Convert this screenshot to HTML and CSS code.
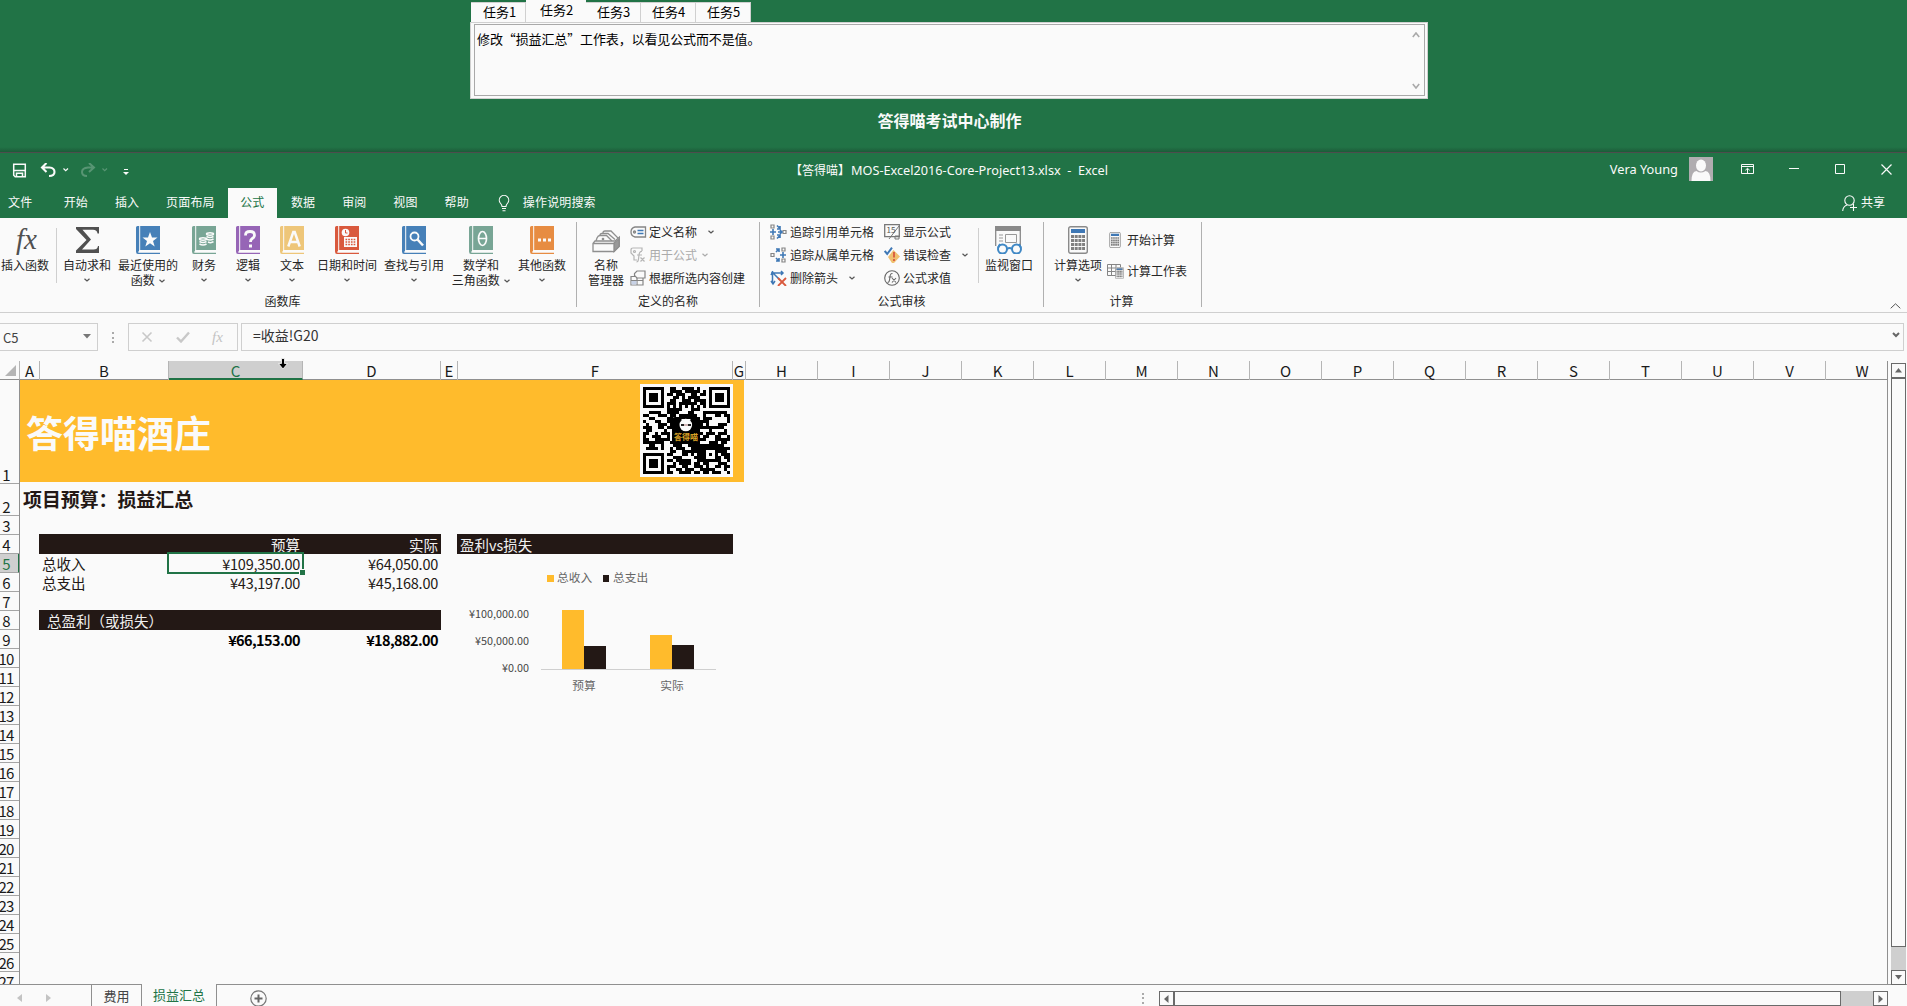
FILE: index.html
```html
<!DOCTYPE html>
<html lang="zh-CN">
<head>
<meta charset="utf-8">
<title>MOS-Excel2016-Core-Project13.xlsx - Excel</title>
<link rel="stylesheet" href="styles.css">
</head>
<body>
<svg class="defs" width="0" height="0">
  <symbol id="chev" viewBox="0 0 6 4"><path d="M.5.7 3 3 5.5.7" fill="none" stroke="currentColor" stroke-width="1.2"/></symbol>
  <symbol id="book" viewBox="0 0 24 28"><path d="M0 1.5Q0 0 1.5 0H24V24H3V26.5H24V28H2Q0 28 0 25.5Z" fill="currentColor"/><path d="M3.7 0V24M2 26H24" stroke="#fafafa"/></symbol>
  <symbol id="calc" viewBox="0 0 20 28"><rect x=".7" y=".7" width="18.6" height="26.6" rx="2" fill="#fafafa" stroke="#8a8a8a" stroke-width="1.4"/><path d="M3 3h14v4H3z" fill="#3f78b5"/><path d="M3 10.5h14M3 14.5h14M3 18.5h14M3 22.5h14" stroke="#808080" stroke-width="3" stroke-dasharray="3 .7"/></symbol>
</svg>

<header class="exam">
  <div class="task-panel">
    <nav class="task-tabs"><span>任务1</span><span class="on">任务2</span><span>任务3</span><span>任务4</span><span>任务5</span></nav>
    <div class="task-frame"><div class="task-box">
      <p>修改“损益汇总”工作表，以看见公式而不是值。</p>
      <div class="task-scroll">
        <svg width="8" height="6"><path d="M.8 5 4 1l3.2 4" fill="none" stroke="#aaa" stroke-width="1.6"/></svg>
        <svg width="8" height="6"><path d="M.8 1 4 5l3.2-4" fill="none" stroke="#aaa" stroke-width="1.6"/></svg>
      </div>
    </div></div>
  </div>
  <div class="maker">答得喵考试中心制作</div>
</header>

<div class="titlebar">
  <div class="quick">
    <svg width="110" height="18" fill="none" stroke="#fafafa">
      <path d="M1.700 1.200h11.600v12.600H3.200L1.700 12.300zM2 7.500h11M4.500 13.500v-3.200h6v3.200" stroke-width="1.500"/>
      <path d="M34.500 0 30 4.500l4.500 4.500M31 4.500h6.500q5 .5 5 4.500t-5.500 4" stroke-width="2.100"/>
      <path d="m51.500 5.500 2.200 2.200L56 5.500" stroke-width="1.200"/>
      <g opacity=".25"><path d="m77 0 5 4.500-5 4.500M82 4.500h-6q-6 .5-6 4.500t5 4" stroke-width="2"/><path d="m90.500 5.500 2.200 2.200L95 5.500" stroke-width="1.200"/></g>
    </svg>
    <svg class="more" width="6" height="8"><path d="M1 1.500h4" stroke="#fafafa"/><path d="M0 4h6L3 7z" fill="#fafafa"/></svg>
  </div>
  <div class="doc-title"><span>【答得喵】</span><span class="doc-name">MOS-Excel2016-Core-Project13.xlsx&nbsp; -&nbsp; Excel</span></div>
  <div class="account">
    <span class="user">Vera Young</span>
    <svg width="24" height="24"><path d="M0 0h24v24H0z" fill="#b0adb0"/><ellipse cx="12" cy="8.500" rx="5" ry="6" fill="#fafafa"/><path d="M2.500 24q0-9.500 5-10 4 3 9 0 5 .5 5 10z" fill="#fafafa"/></svg>
    <svg width="13" height="10" fill="none" stroke="#fafafa"><path d="M.5.5h12v9H.5zM.5 2.500h12M6.500 9V4.500M4.300 6.300l2.200-2 2.200 2"/></svg>
    <svg width="10" height="10"><path d="M0 4.500h10" stroke="#fafafa"/></svg>
    <svg width="10" height="10"><path d="M.5.5h9v9h-9z" fill="none" stroke="#fafafa"/></svg>
    <svg width="11" height="11"><path d="m.5.5 10 10m0-10-10 10" stroke="#fafafa" stroke-width="1.200"/></svg>
  </div>
</div>

<nav class="tabs">
  <span class="file">文件</span><span>开始</span><span>插入</span><span>页面布局</span><span class="active">公式</span><span>数据</span><span>审阅</span><span>视图</span><span>帮助</span>
  <svg class="bulb" width="12" height="17" fill="none" stroke="#fafafa" stroke-width="1.100"><path d="M4 11.500Q4 10 2.300 8A4.700 4.700 0 1 1 9.700 8Q8 10 8 11.500zM4 13.500h4M4.500 15.800h3"/></svg>
  <span class="tell">操作说明搜索</span>
  <div class="share"><svg width="16" height="17" fill="none" stroke="#fafafa" stroke-width="1.100"><circle cx="7.500" cy="5.500" r="4.700"/><path d="M.7 16q.3-4.500 4.300-6M11.500 9v7M8 12.500h7"/></svg><span>共享</span></div>
</nav>

<section class="ribbon">
  <div class="group lib">
    <div class="row">
      <button class="big w50"><span class="fx">fx</span>插入函数</button>
      <i class="sep"></i>
      <button class="big w60"><svg width="24" height="28"><path d="M1 1h23v6.500h-1.500Q22 3.800 18 3.800H7.500L16 13.500 7 23.500h11.500q4 0 4.500-3.500h1V27H1v-2.500L11.500 14 1 3z" fill="#505050"/></svg>自动求和<svg class="chev"><use href="#chev"/></svg></button>
      <button class="big w62"><svg class="blue" width="24" height="28"><use href="#book"/><path d="m14 6 2 5.500h5.500L17 15l1.700 5.500L14 17.200 9.300 20.500 11 15 6.500 11.500H12z" fill="#fafafa"/></svg>最近使用的<span>函数 <svg class="chev in"><use href="#chev"/></svg></span></button>
      <button class="big w50"><svg class="teal" width="24" height="28"><use href="#book"/><g fill="none" stroke="#fafafa" stroke-width="1.500"><ellipse cx="18" cy="8" rx="3.500" ry="1.200"/><path d="M14.500 10.500q3.500 2 7 0M14.500 13q3.500 2 7 0M16 16q3 1.500 5.500-.3"/><ellipse cx="11" cy="13" rx="3.500" ry="1.200"/><path d="M7.500 15.500q3.500 2 7 0M7.500 18q3.500 2 7 0"/></g></svg>财务<svg class="chev"><use href="#chev"/></svg></button>
      <button class="big w38"><svg class="purple" width="24" height="28"><use href="#book"/><path d="M9.500 9.500q0-4 4.500-4t4.500 3.700q0 2-2.500 3.600-1.500 1-1.500 3.200" fill="none" stroke="#fafafa" stroke-width="2.800"/><path d="M13 18.500h3v3h-3z" fill="#fafafa"/></svg>逻辑<svg class="chev"><use href="#chev"/></svg></button>
      <button class="big w50"><svg class="sand" width="24" height="28"><use href="#book"/><path d="m8.300 20.500 5-14.500h1.400l5 14.500M10 16h8" fill="none" stroke="#fafafa" stroke-width="2.500"/></svg>文本<svg class="chev"><use href="#chev"/></svg></button>
      <button class="big w60"><svg class="red" width="24" height="28"><use href="#book"/><circle cx="10.500" cy="6.500" r="3.800" fill="#fafafa"/><path d="M10.500 4v3h2" fill="none" stroke="#d9593d"/><path d="M9 11h13v10H9z" fill="#fafafa"/><path d="M10.500 13.500h10.500M10.500 16h10.500M10.500 18.500h10.500" stroke="#d9593d" stroke-width="1.500" stroke-dasharray="1.700 1"/></svg>日期和时间<svg class="chev"><use href="#chev"/></svg></button>
      <button class="big w74"><svg class="blue" width="24" height="28"><use href="#book"/><circle cx="12.500" cy="10.500" r="4" fill="none" stroke="#fafafa" stroke-width="1.800"/><path d="m15.500 13.500 5.500 6" stroke="#fafafa" stroke-width="2.500"/></svg>查找与引用<svg class="chev"><use href="#chev"/></svg></button>
      <button class="big w60"><svg class="teal" width="24" height="28"><use href="#book"/><ellipse cx="13.500" cy="12.500" rx="4" ry="7" fill="none" stroke="#fafafa" stroke-width="1.700"/><path d="M9.500 12.500h8" stroke="#fafafa" stroke-width="1.500"/></svg>数学和<span>三角函数 <svg class="chev in"><use href="#chev"/></svg></span></button>
      <button class="big w62"><svg class="orange" width="24" height="28"><use href="#book"/><path d="M8 14h3m2 0h3m2 0h3" stroke="#fafafa" stroke-width="3"/></svg>其他函数<svg class="chev"><use href="#chev"/></svg></button>
    </div>
    <div class="cap">函数库</div>
  </div>

  <div class="group names">
    <div class="row">
      <button class="big mgr"><svg width="28" height="22" fill="#fafafa" stroke="#8f8f8f" stroke-width="1.300"><path d="M11 7V3q0-2 2-2h6l7 7v9"/><path d="M8 9V5.500q0-2 2-2h6l7 6"/><path d="M4 11 5 8q1-2.500 3-2.500h6.500L20 11"/><path d="m1 13.500 2-2.500h20l4.500-4v9L22 21.500H1z" fill="#fafafa"/><path d="M22 13v8.500l5-5V9z" fill="#999"/><path d="M1 13.500h21V21"/><circle cx="11" cy="9" r=".7"/></svg>名称<span>管理器</span></button>
      <div class="stack">
        <button class="sm"><svg width="17" height="16" fill="none" stroke="#858585" stroke-width="1.300"><path d="M5 3h10.500v10H5Q1 12 1 8t4-5z"/><circle cx="4.500" cy="8" r="1"/><path d="M7.500 6.500h6M7.500 9.500h6" stroke="#3f78b5"/></svg>定义名称 <svg class="chev gap8"><use href="#chev"/></svg></button>
        <button class="sm off"><svg width="17" height="16" fill="none" stroke="#b5b5b5" stroke-width="1.200"><path d="M7 13H4V9L1 6V3q0-2 2-2h9v3"/><circle cx="4.500" cy="4.500" r="1"/><path d="M12 4.500Q9.500 4 9 8l-.5 4q-.3 3-2 3M7 8h5m-1.500 2.500 4 4m0-4-4 4"/></svg>用于公式<svg class="chev gap2"><use href="#chev"/></svg></button>
        <button class="sm"><svg width="17" height="16" fill="#fafafa" stroke="#858585" stroke-width="1.200"><path d="M1 6.500h12v8.500H1zM1 10.500h12M7 6.500V15"/><path d="M1.500 11h5v3.500h-5z" fill="#c8d2e6" stroke="none"/><path d="M7 1h8v7H7L4.500 5.500V3.500z"/></svg>根据所选内容创建</button>
      </div>
    </div>
    <div class="cap">定义的名称</div>
  </div>

  <div class="group audit">
    <div class="row">
      <div class="stack c1">
        <button class="sm"><svg width="18" height="16" fill="none" stroke="#858585" stroke-width="1.200"><path d="M1 1h3v3H1zM1 12h3v3H1zM13 6.500h3v3h-3z"/><path d="M0 8h6M3 5v6M7 1.500l3 3M10 2v3H7M7 14.500l3-3M10 14v-3H7M8 8h4M10 6l2 2-2 2" stroke="#3f78b5" stroke-width="1.600"/></svg>追踪引用单元格</button>
        <button class="sm"><svg width="18" height="16" fill="none" stroke="#858585" stroke-width="1.200"><path d="M1 6.500h3v3H1zM12 1h3v3h-3zM12 12h3v3h-3z"/><path d="M10 8h6M13 5v6M6 5l3-3M9 5V2H6M6 11l3 3M9 11v3H6" stroke="#3f78b5" stroke-width="1.600"/></svg>追踪从属单元格</button>
        <button class="sm"><svg width="18" height="16" fill="none"><path d="M2.500 1v12M1 3h12M1 5l1.500-3L5 5M11 1l2 2-2 2M4 4l6 6M1 11l2 3 2-3" stroke="#3f78b5" stroke-width="1.500"/><path d="m8 8 8 8m0-8-8 8" stroke="#d9593d" stroke-width="1.800"/></svg>删除箭头 <svg class="chev gap8"><use href="#chev"/></svg></button>
      </div>
      <div class="stack c2">
        <button class="sm"><svg width="17" height="16"><path d="M.7.700h14.600v12H.7z" fill="none" stroke="#777" stroke-width="1.300"/><path d="M15 2 5 15M11 12h4v3h-4z" stroke="#777" fill="none"/><text x="2.500" y="9" font-size="8" fill="#555">15</text></svg>显示公式</button>
        <button class="sm"><svg width="17" height="16"><path d="M9.500 3 16 9.500 10 16H8L4 10z" fill="#f0c070"/><path d="m.7 4 2.500 3L8 .7" fill="none" stroke="#3f78b5" stroke-width="2"/><path d="M10 5v5.500m0 1.500v2" stroke="#d9593d" stroke-width="1.800"/></svg>错误检查<svg class="chev gap11"><use href="#chev"/></svg></button>
        <button class="sm"><svg width="17" height="16" fill="none" stroke="#666" stroke-width="1.100"><circle cx="8" cy="8" r="7.300"/><path d="M8.500 3.500q-2-.5-2.500 3L5.500 10q-.3 2.500-2 2.500M4.500 7h4M8 8l4 4.500M12 8l-4 4.500"/></svg>公式求值</button>
      </div>
      <i class="sep"></i>
      <button class="big w60"><svg width="29" height="31" fill="none"><path d="M.7.700h24.600V20M.7.700V20" stroke="#8a8a8a" stroke-width="1.300"/><path d="M0 0h26v5H0z" fill="#8a8a8a"/><path d="M4 9h4M4 12h4M4 15h4M10.500 8.500h11v8h-11z" stroke="#999"/><circle cx="7.500" cy="23" r="4.500" stroke="#3f88c5" stroke-width="2"/><circle cx="21.500" cy="23" r="4.500" stroke="#3f88c5" stroke-width="2"/><path d="M12 23q2.500-2 5 0M3 22l2-4M26 22l-2-4" stroke="#3f88c5" stroke-width="1.800"/></svg>监视窗口</button>
    </div>
    <div class="cap">公式审核</div>
  </div>

  <div class="group compute">
    <div class="row">
      <button class="big w62"><svg width="20" height="28"><use href="#calc"/></svg>计算选项<svg class="chev"><use href="#chev"/></svg></button>
      <div class="stack two">
        <button class="sm"><svg width="18" height="16"><use href="#calc" x="2" width="12" height="16"/></svg>开始计算</button>
        <button class="sm"><svg width="18" height="16" fill="none" stroke="#858585"><path d="M.5 1.500h13v11H.5zM.5 5h13M.5 8.500h13M4.500 1.500v11M9 1.500v11"/><use href="#calc" x="8" y="4" width="9" height="12"/></svg>计算工作表</button>
      </div>
    </div>
    <div class="cap">计算</div>
  </div>
  <svg class="collapse" width="11" height="6"><path d="M.7 5.300 5.500.8l4.800 4.500" fill="none" stroke="#555"/></svg>
</section>

<div class="formula-bar">
  <div class="name-box"><span>C5</span><svg width="8" height="5"><path d="M0 0h8L4 4.500z" fill="#777"/></svg></div>
  <i class="dots"></i>
  <div class="fbtns">
    <svg width="12" height="12"><path d="m1.500 1.500 9 9m0-9-9 9" stroke="#c8c8c8" stroke-width="1.600"/></svg>
    <svg width="14" height="12"><path d="m1 6.500 4 4 8-9" fill="none" stroke="#c8c8c8" stroke-width="2.400"/></svg>
    <span class="fx small">fx</span>
  </div>
  <div class="formula"><span>=收益!G20</span><svg width="8" height="6"><path d="m1 1 3 3 3-3" fill="none" stroke="#666" stroke-width="2"/></svg></div>
</div>

<main class="work">
  <div class="sheet">
    <div class="corner"><svg width="11" height="11"><path d="M11 0v11H0z" fill="#b5b5b5"/></svg></div>
    <div class="cols" id="cols"></div>
    <div class="rows" id="rows"></div>
    <div class="cells">
      <div class="banner"><h1>答得喵酒庄</h1>
        <svg class="qr" width="93" height="93"><path d="M0 0h93v93H0z" fill="#fafafa"/><path id="qr" fill="#000"/><rect x="32" y="33" width="28" height="27" rx="3"/><circle cx="45.800" cy="41" r="6.300" fill="#fafafa"/><path d="M41 35l2 2h6l2-2" fill="#fafafa"/><path d="M41 41h3m4 0h3" stroke="#222" stroke-width="2"/><path d="M44 41h4" stroke="#a77"/><text x="34" y="56" font-size="8" font-weight="700" fill="#d9a227">答得喵</text></svg>
      </div>
      <h2>项目预算：损益汇总</h2>
      <div class="bar r4 bc"></div><div class="bar r8 bc"></div>
      <div class="c r4 cC lt">预算</div><div class="c r4 cD lt">实际</div>
      <div class="l r5">总收入</div><div class="c n r5 cC">¥109,350.00</div><div class="c n r5 cD">¥64,050.00</div>
      <div class="l r6">总支出</div><div class="c n r6 cC">¥43,197.00</div><div class="c n r6 cD">¥45,168.00</div>
      <div class="l r8 lt total">总盈利（或损失）</div>
      <div class="c r9 cC b">¥66,153.00</div><div class="c r9 cD b">¥18,882.00</div>
      <div class="bar r4 cF lt">盈利vs损失</div>
      <div class="selection"><i></i></div>
      <svg class="chart" width="276" height="150">
        <g fill="#ffbb2c"><path d="M90 22h7v7h-7zM105 57h22v59h-22zM193 82h22v34h-22z"/></g>
        <g fill="#231815"><path d="M146 22h6v7h-6zM127 93h22v23h-22zM215 92h22v24h-22z"/></g>
        <path d="M84 116.500h175" stroke="#cfcfcf"/>
        <g class="axis"><text x="100" y="29">总收入</text><text x="156" y="29">总支出</text><text x="127" y="136.500" text-anchor="middle">预算</text><text x="215" y="136.500" text-anchor="middle">实际</text></g>
        <g class="axis num" text-anchor="end"><text x="72" y="65">¥100,000.00</text><text x="72" y="92">¥50,000.00</text><text x="72" y="119">¥0.00</text></g>
      </svg>
    </div>
  </div>
  <div class="vscroll"><i class="btn"><svg width="7" height="5"><path d="M3.500 0 7 4.500H0z" fill="#666"/></svg></i><i class="thumb"></i><i class="btn last"><svg width="7" height="5"><path d="M3.500 4.500 7 0H0z" fill="#666"/></svg></i></div>
  <svg class="cursor" width="10" height="12"><path d="M3.500.5h3v5h3L5 11 .5 5.500h3z" fill="#000" stroke="#fff" stroke-width=".8"/></svg>
</main>

<footer class="foot">
  <div class="nav"><svg width="34" height="8"><path d="M5 0v8L0 4zM29 0v8l5-4z" fill="#c3c3c3"/></svg></div>
  <div class="sheet-tab">费用</div>
  <div class="sheet-tab current">损益汇总</div>
  <div class="rest">
    <svg class="plus" width="17" height="17"><circle cx="8.500" cy="8.500" r="7.700" fill="none" stroke="#777" stroke-width="1.200"/><path d="M8.500 4.500v8M4.500 8.500h8" stroke="#666" stroke-width="2"/></svg>
    <i class="dots"></i>
    <div class="hscroll"><i class="btn"><svg width="5" height="8"><path d="M4.500 0v8L0 4z" fill="#666"/></svg></i><i class="thumb"></i><i class="btn last"><svg width="5" height="8"><path d="M.5 0v8L5 4z" fill="#666"/></svg></i></div>
  </div>
</footer>
<script src="main.js"></script>
</body>
</html>
```
FILE: main.js
```js
// Column letters and row numbers
const widths = [20, 129, 134, 138, 17, 275, 13];
const cols = document.getElementById('cols');
for (let i = 0; i < 23; i++) {
  const d = document.createElement('div');
  d.textContent = String.fromCharCode(65 + i);
  d.style.width = (widths[i] || (i === 22 ? 72 : 72)) + 'px';
  if (i === 2) d.className = 'sel';
  cols.append(d);
}
const rows = document.getElementById('rows');
for (let r = 1; r <= 27; r++) {
  const d = document.createElement('div');
  d.textContent = r;
  d.style.height = (r === 1 ? 104 : r === 2 ? 32 : 19) + 'px';
  if (r === 5) d.className = 'sel';
  rows.append(d);
}
// QR modules, one string per line
const qr = [
  '11111110011001111010001111111',
  '10000010011110111110101000001',
  '10111010110111001101101011101',
  '10111010001101011110001011101',
  '10111010011001110111101011101',
  '10000010111011111101101000001',
  '11111110101010101010101111111',
  '00000000111110001110000000000',
  '00111100111100011000111111110',
  '11000111011011111100100011011',
  '00110000110111111110111000001',
  '10001100111111111111110000001',
  '01000111011111111111010001110',
  '11100110111111111101111111100',
  '01100001001111111110001000010',
  '11001011101111111111011101110',
  '10011100101111111110110011001',
  '11001111101111111111100011111',
  '11111110011111111110001110110',
  '00110010001110011111111111100',
  '01111010010111001111111111111',
  '00000000011001111111100011110',
  '11111110110001101011101010111',
  '10000010001110000111100011011',
  '10111010110111110011111111001',
  '10111010001011110110110001110',
  '10111010111001100111010011011',
  '10000010100110111001111100010',
  '11111110110011110110110111001'
];
let path = '';
qr.forEach((s, y) => [...s].forEach((c, x) => {
  if (c === '1') path += `M${3 + x * 3} ${3 + y * 3}h3v3h-3z`;
}));
document.getElementById('qr').setAttribute('d', path);
```
FILE: styles.css
```css
* { box-sizing: border-box; }
body { margin: 0; width: 1907px; height: 1006px; overflow: hidden; display: flex; flex-direction: column; background: #fafafa; color: #262626; font: 12px/15px "Noto Sans CJK SC", sans-serif; }
svg { display: block; flex: none; }
.defs { position: absolute; }
i { display: block; }
button { border: 0; background: none; padding: 0; margin: 0; font: inherit; color: inherit; white-space: nowrap; }
h1, h2, p { margin: 0; }

.exam { height: 153px; flex: none; background: linear-gradient(#217346 147px, #1c5c39 152px, #4d4d4d 152px); display: flex; flex-direction: column; align-items: center; }
.task-panel { width: 958px; height: 99px; margin-right: 9px; display: flex; flex-direction: column; }
.task-tabs { display: flex; align-items: flex-end; height: 22px; padding-left: 1px; }
.task-tabs span { height: 20px; width: 55px; padding: 1px 0 0 1px; background: #fafafa; border: solid #d0d0d0; border-width: 1px 1px 0 0; text-align: center; font-size: 13px; line-height: 16px; color: #000; }
.task-tabs span:first-child { padding-left: 3px; }
.task-tabs span.on { height: 22px; width: 60px; border: 0; line-height: 17px; }
.task-frame { flex: 1; background: #fafafa; border: 1px solid #d0d0d0; padding: 1px 2px 2px 3px; }
.task-box { height: 100%; border: 1px solid #a9a9a9; display: flex; justify-content: space-between; padding: 6px 4px 4px 2px; font-size: 13px; line-height: 18px; color: #000; }
.task-box p { margin-top: -1px; letter-spacing: -.12px; }
.task-scroll { display: flex; flex-direction: column; justify-content: space-between; padding: 1px 0 2px; }
.maker { margin: 9px 0 0 -8px; font-size: 16px; line-height: 24px; font-weight: 700; color: #fafafa; }

.titlebar { height: 35px; flex: none; display: grid; grid-template-columns: 790px 1fr auto; background: #217346; color: #fafafa; }
.quick { display: flex; padding: 10px 0 0 12px; }
.more { margin-top: 5px; margin-left: 1px; }
.doc-title { display: flex; padding-top: 8px; font-size: 12px; line-height: 18px; }
.doc-name { font: 12.7px/18px "Noto Sans", sans-serif; white-space: pre; margin-left: 1px; }
.account { display: flex; align-items: center; padding: 0 15px 3px 0; }
.account .user { font: 12.8px/18px "Noto Sans", sans-serif; margin-right: 11px; }
.account svg:nth-of-type(2) { margin-left: 28px; }
.account svg:nth-of-type(n+3) { margin-left: 36px; }
.account svg:nth-of-type(3) { margin-left: 35px; }

.tabs { height: 30px; flex: none; display: flex; background: #217346; color: #fafafa; line-height: 27px; }
.tabs > span { padding: 0 13px 0 13.9px; letter-spacing: .15px; }
.tabs > .file { padding: 0 17.5px 0 8px; }
.tabs .active { background: #fafafa; color: #217346; padding: 0 12.5px; }
.bulb { margin: 7px 0 0 16px; }
.tabs > .tell { padding: 0 0 0 13px; }
.share { margin: 0 22px 0 auto; display: flex; gap: 3px; }
.share svg { margin-top: 7px; }

.ribbon { height: 95px; flex: none; display: flex; border-bottom: 1px solid #cfcfcf; position: relative; }
.group { margin: 4px 0; height: 85px; border-right: 1px solid #b0b0b0; display: flex; flex-direction: column; justify-content: space-between; }
.row { display: flex; }
.cap { text-align: center; line-height: 15px; margin-bottom: -1px; }
.sep { width: 1px; height: 55px; margin-top: 6px; background: #cfcfcf; }
.big { display: flex; flex-direction: column; align-items: center; padding-top: 4px; height: 66px; line-height: 15px; }
.big > svg:first-child, .big > .fx { margin-bottom: 3px; height: 28px; }
.w38 { width: 38px; } .w50 { width: 50px; } .w60 { width: 60px; } .w62 { width: 62px; } .w74 { width: 74px; }
.blue { color: #4680b8; } .teal { color: #78a595; } .purple { color: #9665b6; } .sand { color: #eec679; } .red { color: #d9593d; } .orange { color: #e78c42; }
.fx { font: italic 29px/26px "Liberation Serif", serif; color: #505050; padding-left: 3px; }
.chev { width: 6px; height: 4px; color: #555; }
.big > .chev { margin-top: 6px; }
.chev.in { display: inline-block; vertical-align: 2px; margin-left: 2px; }
.lib { width: 577px; }
.lib .sep { margin-left: 6px; }
.lib .cap { padding-right: 11px; }
.names { width: 183px; }
.mgr { width: 46px; margin-left: 6px; }
.mgr > svg:first-child { margin-top: 4px; height: 24px; }
.stack { display: flex; flex-direction: column; margin-top: -2px; }
.names .stack { margin-left: 1px; }
.sm { display: flex; align-items: center; height: 23px; gap: 2px; text-align: left; }
.stack .gap8 { margin-left: 9px; } .stack .gap2 { margin-left: 3px; } .stack .gap11 { margin-left: 9px; }
.off, .off .chev { color: #ababab; }
.audit { width: 284px; }
.c1 { margin-left: 10px; width: 114px; }
.c2 { width: 94px; }
.compute { width: 158px; }
.compute .big { margin-left: 3px; }
.compute .cap { padding-right: 2px; }
.two { padding-top: 8px; gap: 8px; margin-left: -2px; }
.collapse { position: absolute; right: 6px; bottom: 3px; }

.formula-bar { height: 48px; flex: none; display: flex; padding-top: 10px; }
.formula-bar > div { height: 28px; border: 1px solid #cfcfcf; }
.formula-bar > .name-box { width: 98px; border-left: 0; display: flex; justify-content: space-between; align-items: center; padding: 0 6px 2px 3px; font-size: 13px; }
.name-box span { padding-top: 2px; color: #444; }
.dots { width: 2px; height: 11px; background: repeating-linear-gradient(#aaa 0 2px, transparent 2px 4.500px); }
.formula-bar .dots { margin: 9px 14px 0; }
.fbtns { width: 110px; display: flex; align-items: center; gap: 23px; padding-left: 12px; }
.fx.small { font-size: 15px; line-height: 16px; color: #c3c3c3; padding: 0; margin-left: -1px; }
.formula { flex: 1; margin: 0 3px; display: flex; justify-content: space-between; align-items: center; padding: 0 3px 4px 11px; font-size: 14px; line-height: 20px; color: #333; }

.work { height: 623px; flex: none; display: flex; position: relative; }
.sheet { width: 1888px; display: grid; grid-template: 19px 604px / 20px 1868px; border-right: 1px solid #8f8f8f; overflow: hidden; }
.corner { border-right: 1px solid #b5b5b5; border-bottom: 1px solid #8f8f8f; padding: 4px 0 0 5px; }
.cols { display: flex; border-bottom: 1px solid #8f8f8f; }
.cols div { flex: none; height: 19px; border-right: 1px solid #b5b5b5; font-size: 15px; line-height: 20px; display: flex; justify-content: center; color: #1a1a1a; }
.cols div:last-child { border: 0; }
.cols .sel { background: #cfcfcf; color: #217346; border-bottom: 2px solid #217346; }
.rows { border-right: 1px solid #8f8f8f; overflow: hidden; }
.rows div { border-bottom: 1px solid #a5a5a5; display: flex; align-items: flex-end; justify-content: center; padding: 0 7px 1px 0; font-size: 15px; line-height: 15px; letter-spacing: -.9px; color: #1a1a1a; white-space: nowrap; }
.rows .sel { background: #cfcfcf; color: #217346; border-right: 2px solid #217346; margin-right: -1px; padding-right: 6px; }
.cells { display: grid; grid-template-columns: 19px 129px 135px 138px 16px 276px 12px 1fr; grid-template-rows: 102px 33px repeat(25, 19px); position: relative; font-size: 14.500px; line-height: 21px; color: #231815; }
.banner { grid-area: 1 / 1 / 2 / 8; width: 724px; background: #ffbb2c; display: flex; justify-content: space-between; padding: 4px 11px 0 6px; }
.banner h1 { font-size: 37px; line-height: 96px; font-weight: 700; color: #fafafa; }
h2 { grid-area: 2 / 1 / 3 / 8; font-size: 18.900px; line-height: 34px; font-weight: 700; padding-left: 3px; }
.bar { background: #231815; height: 20px; }
.bc { grid-column: 2 / 5; }
.cF { grid-column: 6; padding-left: 3px; }
.r4 { grid-row: 4; } .r5 { grid-row: 5; } .r6 { grid-row: 6; } .r8 { grid-row: 8; } .r9 { grid-row: 9; }
.cC { grid-column: 3; } .cD { grid-column: 4; }
.c { text-align: right; padding-right: 3px; }
.n { letter-spacing: -.25px; }
.l { grid-column: 2 / 4; padding-left: 3px; }
.lt { color: #f0f0f0; z-index: 1; }
.total { padding-left: 8px; }
.b { font-weight: 700; letter-spacing: -.6px; color: #000; }
.selection { position: absolute; left: 147px; top: 172px; width: 137px; height: 22px; border: 2px solid #217346; z-index: 2; }
.selection i { position: absolute; right: -3px; bottom: -3px; width: 6px; height: 6px; background: #217346; border: solid #fafafa; border-width: 1px 0 0 1px; }
.chart { grid-area: 5 / 6 / 13 / 7; }
.axis { font-size: 11.700px; fill: #666; }
.num { font-size: 10.800px; fill: #444; }
.vscroll { margin: 2px 1px 0 3px; width: 15px; height: 622px; display: flex; flex-direction: column; background: #cfcfcf; }
.btn, .thumb { border: 1px solid #6a6a6a; background: #fafafa; }
.btn { width: 15px; height: 15px; display: grid; place-items: center; flex: none; }
.vscroll .thumb { height: 569px; }
.last { margin: auto 0 0 auto; }
.cursor { position: absolute; left: 278px; top: -3px; }

.foot { height: 22px; flex: none; display: flex; }
.foot > div { border-top: 1px solid #8f8f8f; }
.nav { width: 91px; padding: 9px 0 0 17px; }
.sheet-tab { width: 51px; border-left: 1px solid #8f8f8f; border-right: 1px solid #8f8f8f; font-size: 13px; line-height: 22px; text-align: center; color: #444; }
.foot .current { width: 74px; border: 0; color: #217346; }
.rest { flex: 1; border-left: 1px solid #8f8f8f; display: flex; }
.plus { margin: 5px 0 0 33px; }
.rest .dots { margin: 8px 15px 0 auto; }
.hscroll { margin: 6px 19px 0 0; width: 729px; display: flex; background: #cfcfcf; height: 15px; }
.hscroll .thumb { width: 667px; }
```
